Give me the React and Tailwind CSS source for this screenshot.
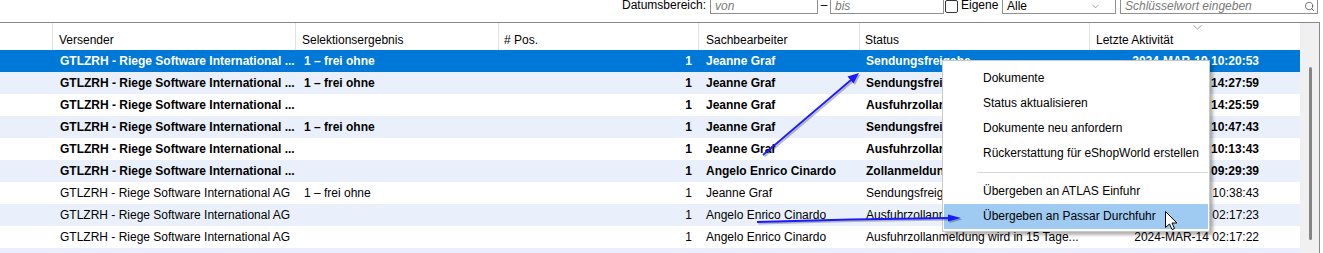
import React from 'react';
import { Search, ChevronDown } from 'lucide-react';

const FONT = { fontFamily: '"Liberation Sans", Arial, sans-serif' };

const ROWS = [
  { v: 'GTLZRH - Riege Software International ...', sel: '1 – frei ohne', sb: 'Jeanne Graf', st: 'Sendungsfreigabe', dt: '2024-MAR-19 10:20:53', bold: true, active: true },
  { v: 'GTLZRH - Riege Software International ...', sel: '1 – frei ohne', sb: 'Jeanne Graf', st: 'Sendungsfreigabe erteilt', dt: '2024-MAR-18 14:27:59', bold: true },
  { v: 'GTLZRH - Riege Software International ...', sel: '', sb: 'Jeanne Graf', st: 'Ausfuhrzollanmeldung wird in 15 Tage...', dt: '2024-MAR-18 14:25:59', bold: true },
  { v: 'GTLZRH - Riege Software International ...', sel: '1 – frei ohne', sb: 'Jeanne Graf', st: 'Sendungsfreigabe erteilt', dt: '2024-MAR-18 10:47:43', bold: true },
  { v: 'GTLZRH - Riege Software International ...', sel: '', sb: 'Jeanne Graf', st: 'Ausfuhrzollanmeldung wird in 15 Tage...', dt: '2024-MAR-18 10:13:43', bold: true },
  { v: 'GTLZRH - Riege Software International ...', sel: '', sb: 'Angelo Enrico Cinardo', st: 'Zollanmeldung abgeschlossen', dt: '2024-MAR-15 09:29:39', bold: true },
  { v: 'GTLZRH - Riege Software International AG', sel: '1 – frei ohne', sb: 'Jeanne Graf', st: 'Sendungsfreigabe erteilt', dt: '2024-MAR-15 10:38:43' },
  { v: 'GTLZRH - Riege Software International AG', sel: '', sb: 'Angelo Enrico Cinardo', st: 'Ausfuhrzollanmeldung wird in 15 Tage...', dt: '2024-MAR-14 02:17:23' },
  { v: 'GTLZRH - Riege Software International AG', sel: '', sb: 'Angelo Enrico Cinardo', st: 'Ausfuhrzollanmeldung wird in 15 Tage...', dt: '2024-MAR-14 02:17:22' },
  { empty: true },
];

const MENU = [
  'Dokumente',
  'Status aktualisieren',
  'Dokumente neu anfordern',
  'Rückerstattung für eShopWorld erstellen',
  '-',
  'Übergeben an ATLAS Einfuhr',
  'Übergeben an Passar Durchfuhr',
];

function Toolbar() {
  return (
    <div className="h-[22px] overflow-hidden">
      <div className="-mt-[7px] flex h-[21px] items-center pl-[622px] text-[12px] text-black">
        <span className="mt-[3px] w-[88px]">Datumsbereich:</span>
        <div className="flex h-[21px] w-[108px] items-center border border-[#8f8f8f] bg-white pl-[4px] pt-[5px] italic text-[#7a7a7a]">von</div>
        <span className="mt-[3px] w-[12px] text-center">–</span>
        <div className="flex h-[21px] w-[114px] items-center border border-[#8f8f8f] bg-white pl-[4px] pt-[5px] italic text-[#7a7a7a]">bis</div>
        <div className="ml-[1px] mt-[5px] h-[13px] w-[13px] rounded-[2px] border border-[#333] bg-white" />
        <span className="ml-[3px] mt-[3px] w-[41px]">Eigene</span>
        <div className="flex h-[21px] w-[114px] items-center justify-between border border-[#8f8f8f] bg-white pl-[4px] pr-[14px] pt-[5px]">
          <span>Alle</span>
          <ChevronDown size={11} strokeWidth={1.2} className="text-[#555]" />
        </div>
        <div className="ml-[4px] flex h-[21px] w-[198px] items-center justify-between border border-[#8f8f8f] bg-white pl-[4px] pr-[2px] pt-[5px] italic text-[#7a7a7a]">
          <span>Schlüsselwort eingeben</span>
          <Search size={11} strokeWidth={1.6} className="text-[#444]" />
        </div>
      </div>
    </div>
  );
}

function Header() {
  return (
    <div className="flex h-[27px] bg-white text-[12px] text-black">
      <div className="w-[52px]" />
      <div className="w-[243px] border-l border-[#e3e3e3] pl-[6px] pt-[8px]">Versender</div>
      <div className="w-[203px] border-l border-[#e3e3e3] pl-[6px] pt-[8px]">Selektionsergebnis</div>
      <div className="w-[200px] border-l border-[#e3e3e3] pl-[5px] pt-[8px]"># Pos.</div>
      <div className="w-[161px] border-l border-[#e3e3e3] pl-[7px] pt-[8px]">Sachbearbeiter</div>
      <div className="w-[230px] border-l border-[#e3e3e3] pl-[5px] pt-[8px]">Status</div>
      <div className="relative w-[211px] border-l border-[#e3e3e3] pl-[6px] pt-[8px]">
        Letzte Aktivität
        <svg className="absolute left-[103px] top-[2px]" width="9" height="5" viewBox="0 0 9 5">
          <polyline points="0.5,0.5 4.5,4 8.5,0.5" fill="none" stroke="#a0a0a0" strokeWidth="1" />
        </svg>
      </div>
    </div>
  );
}

function Row({ r, i }) {
  const bg = r.active ? 'bg-[#0078d7] text-white' : i % 2 === 1 ? 'bg-[#e9f0fb] text-black' : 'bg-white text-black';
  const weight = r.bold ? 'font-bold' : 'font-normal';
  return (
    <div className={`flex h-[22px] text-[12px] leading-[22px] ${bg} ${weight}`}>
      {!r.empty && (
        <>
          <div className="w-[52px]" />
          <div className="w-[243px] overflow-hidden whitespace-nowrap pl-[8px]">{r.v}</div>
          <div className="w-[203px] overflow-hidden whitespace-nowrap pl-[9px]">{r.sel}</div>
          <div className="w-[200px] pr-[6px] text-right">1</div>
          <div className="w-[161px] overflow-hidden whitespace-nowrap pl-[8px]">{r.sb}</div>
          <div className="w-[230px] overflow-hidden whitespace-nowrap pl-[7px]">{r.st}</div>
          <div className="w-[211px] whitespace-nowrap pr-[41px] text-right">{r.dt}</div>
        </>
      )}
    </div>
  );
}

function ContextMenu() {
  return (
    <div className="absolute left-[942px] top-[60px] h-[172px] w-[268px] border border-[#c8c8c8] bg-white px-[1px] pt-[5px] text-[12px] text-black shadow-[3px_3px_3px_rgba(0,0,0,0.3)]">
      {MENU.map((m, i) =>
        m === '-' ? (
          <div key={i} className="flex h-[13px] items-center pl-[33px]">
            <div className="h-[1px] w-full bg-[#d7d7d7]" />
          </div>
        ) : (
          <div
            key={i}
            className={`h-[25px] pl-[39px] leading-[25px] ${i === 6 ? 'bg-[#9fcbf3]' : ''}`}
          >
            {m}
          </div>
        )
      )}
    </div>
  );
}

function Overlay() {
  return (
    <svg className="pointer-events-none absolute left-0 top-0" width="1323" height="253">
      <g opacity="0.25" transform="translate(1.5,1.5)">
        <line x1="763" y1="155" x2="851" y2="80" stroke="#000" strokeWidth="2" />
        <polygon points="859,73 853.5,83.5 847.5,76.5" fill="#000" />
        <path d="M757 222 Q 850 219 949 218" fill="none" stroke="#000" strokeWidth="2" />
        <polygon points="961,218 948,214.5 948,221.5" fill="#000" />
      </g>
      <line x1="763" y1="155" x2="851" y2="80" stroke="#1a1aff" strokeWidth="1.8" />
      <polygon points="859,73 853.5,83.5 847.5,76.5" fill="#1a1aff" />
      <path d="M757 222 Q 850 219 949 218" fill="none" stroke="#1a1aff" strokeWidth="1.8" />
      <polygon points="961,218 948,214.5 948,221.5" fill="#1a1aff" />
      <g transform="translate(1165.5,211.5)">
        <path d="M0 0 L0 16 L4 12.5 L6.5 18 L9 17 L6.5 11.5 L11.5 11.5 Z" fill="#fff" stroke="#000" strokeWidth="1" strokeLinejoin="round" />
      </g>
    </svg>
  );
}

export default function App() {
  return (
    <div className="relative h-[253px] w-[1323px] overflow-hidden bg-white" style={FONT}>
      <Toolbar />
      <div className="h-[1px] w-[1320px] bg-[#828790]" />
      <div className="flex">
        <div className="w-[1300px]">
          <Header />
          {ROWS.map((r, i) => (
            <Row key={i} r={r} i={i} />
          ))}
        </div>
        <div className="flex w-[19px] flex-col bg-[#f0f0f0]">
          <div className="ml-[9px] mt-[44px] h-[173px] w-[3px] rounded-full bg-[#858585]" />
        </div>
        <div className="w-[1px] bg-[#828790]" />
      </div>
      <ContextMenu />
      <Overlay />
    </div>
  );
}
